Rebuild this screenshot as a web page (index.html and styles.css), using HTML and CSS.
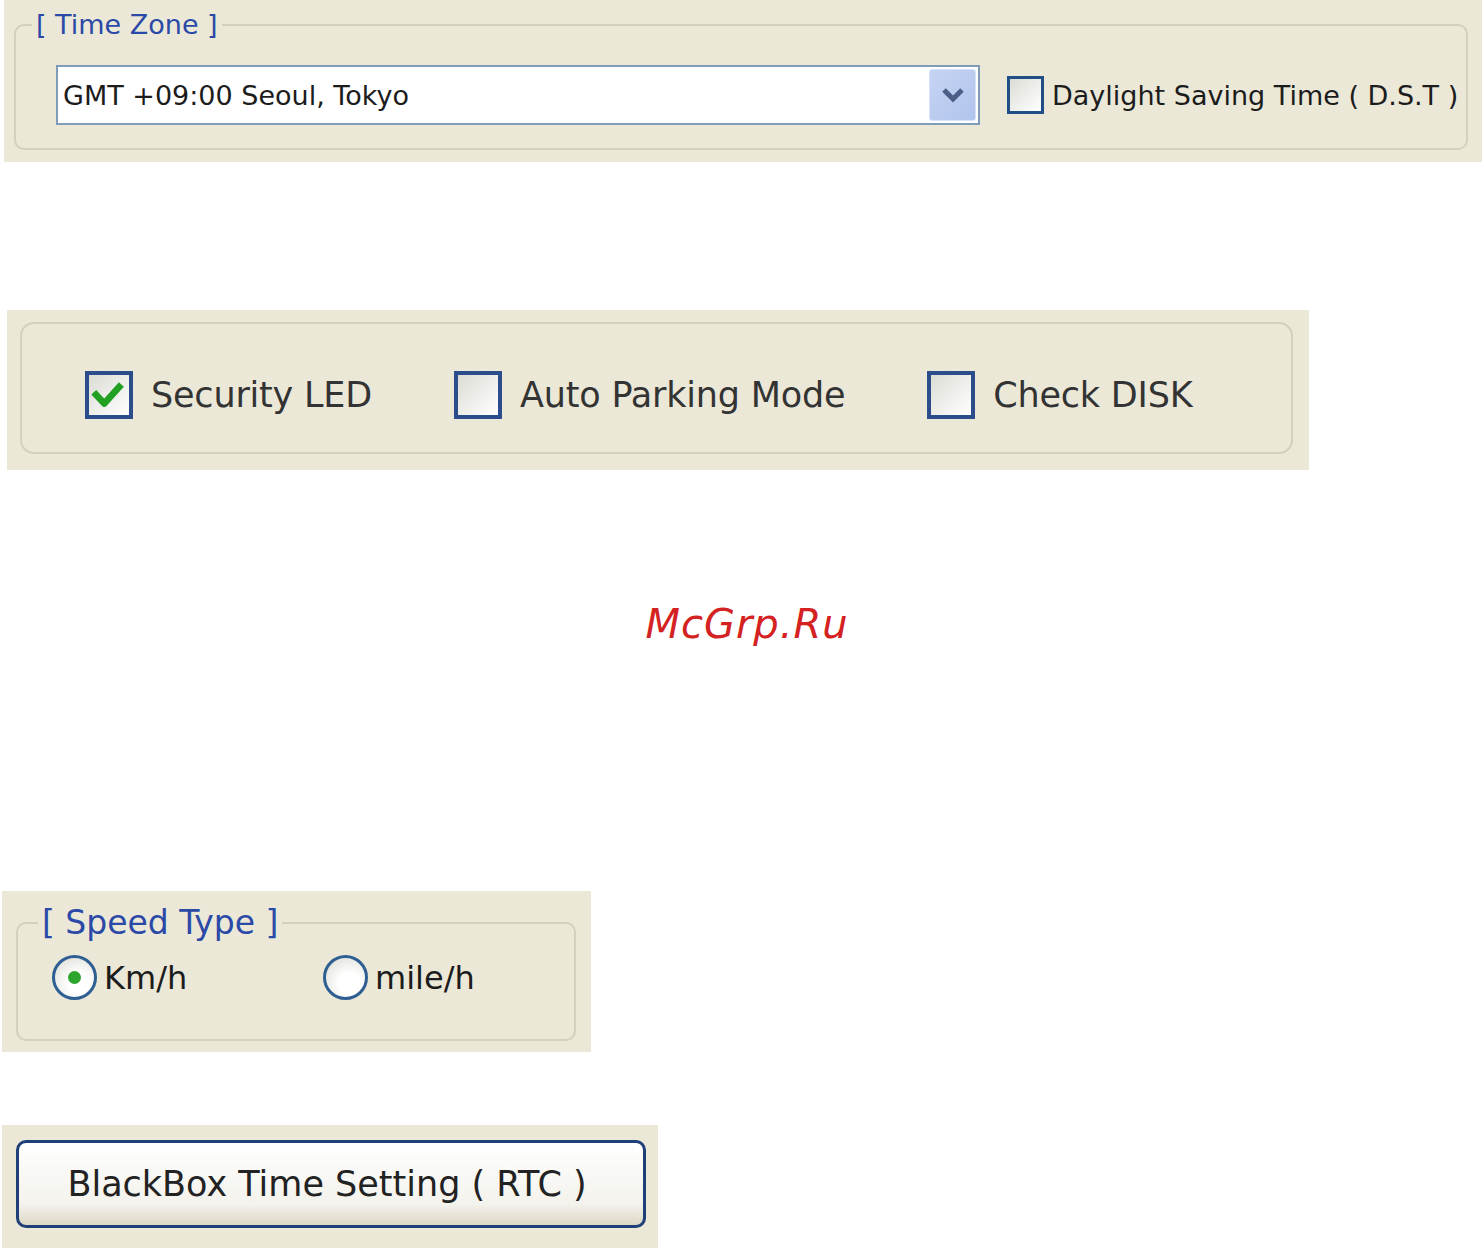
FILE: index.html
```html
<!DOCTYPE html>
<html lang="en">
<head>
    <meta charset="UTF-8">
    <title>BlackBox Settings</title>
    <link rel="stylesheet" href="styles.css">
</head>
<body>

    <!-- time zone -->
    <div class="panel panel-timezone">
        <fieldset class="group">
            <legend>[ Time Zone ]</legend>
            <div class="tz-row">
                <div class="combo">
                    <span class="combo-text">GMT +09:00 Seoul, Tokyo</span>
                    <span class="combo-btn">
                        <svg width="24" height="16" viewBox="0 0 24 16">
                            <path d="M3 3 L12 12 L21 3" fill="none" stroke="#4b5f86" stroke-width="5"/>
                        </svg>
                    </span>
                </div>
                <label class="check small">
                    <span class="box"></span>
                    <span>Daylight Saving Time ( D.S.T )</span>
                </label>
            </div>
        </fieldset>
    </div>

    <!-- options -->
    <div class="panel panel-options">
        <div class="group options-row">
            <label class="check big">
                <span class="box">
                    <svg width="42" height="42" viewBox="0 0 42 42">
                        <path d="M5 18 L16 30 L34 10" fill="none" stroke="#22a022" stroke-width="7" stroke-linejoin="round"/>
                    </svg>
                </span>
                <span>Security LED</span>
            </label>
            <label class="check big">
                <span class="box"></span>
                <span>Auto Parking Mode</span>
            </label>
            <label class="check big">
                <span class="box"></span>
                <span>Check DISK</span>
            </label>
        </div>
    </div>

    <div class="watermark">McGrp.Ru</div>

    <!-- speed type -->
    <div class="panel panel-speed">
        <fieldset class="group">
            <legend>[ Speed Type ]</legend>
            <div class="speed-row">
                <label class="radio">
                    <span class="dot selected"></span>
                    <span>Km/h</span>
                </label>
                <label class="radio">
                    <span class="dot"></span>
                    <span>mile/h</span>
                </label>
            </div>
        </fieldset>
    </div>

    <div class="panel panel-rtc">
        <button class="rtc-btn">BlackBox Time Setting ( RTC )</button>
    </div>

</body>
</html>
```

FILE: styles.css
```css
body, html {
    margin: 0;
    padding: 0;
    background-color: #ffffff;
    font-family: "DejaVu Sans", Verdana, sans-serif;
    color: #262626;
}
.panel {
    background-color: #ebe8d8;
    box-sizing: border-box;
}
.group {
    border: 2px solid #d3d0bf;
    border-radius: 10px;
    margin: 0;
    min-width: 0;
}
legend {
    color: #2b49a6;
    padding: 0 4px;
}

/* time zone */
.panel-timezone {
    margin-left: 4px;
    width: 1478px;
    height: 162px;
    padding: 9px 14px 0 10px;
}
.panel-timezone .group {
    height: 141px;
    box-sizing: border-box;
    padding: 24px 0 0 40px;
}
.panel-timezone legend {
    font-size: 27px;
    line-height: 32px;
    margin-left: -24px;
}
.tz-row {
    display: flex;
    align-items: center;
}
.combo {
    width: 924px;
    height: 60px;
    box-sizing: border-box;
    border: 2px solid #7f9db9;
    background-color: #ffffff;
    display: flex;
    align-items: center;
    justify-content: space-between;
    padding: 0 2px 0 5px;
    margin-right: 27px;
}
.combo-text {
    font-size: 27px;
    color: #1c1c1c;
}
.combo-btn {
    width: 45px;
    height: 50px;
    border-radius: 3px;
    background: linear-gradient(135deg, #c6d4f3, #b1c4ec);
    border: 1px solid #d7e2fa;
    display: flex;
    align-items: center;
    justify-content: center;
}
.check {
    display: flex;
    align-items: center;
}
.box {
    box-sizing: border-box;
    border: 3px solid #1f4f86;
    background: linear-gradient(135deg, #dcdcd5, #ffffff);
    display: flex;
    align-items: center;
    justify-content: center;
}
.check.small .box {
    width: 37px;
    height: 38px;
    margin-right: 8px;
}
.check.small {
    font-size: 27px;
    color: #1c1c1c;
}

/* options */
.panel-options {
    margin: 148px 0 0 7px;
    width: 1302px;
    height: 160px;
    padding: 12px 16px 0 13px;
}
.options-row {
    height: 132px;
    box-sizing: border-box;
    display: flex;
    align-items: center;
    padding: 14px 0 0 63px;
    gap: 82px;
    border-radius: 14px;
}
.check.big {
    font-size: 35px;
    letter-spacing: -0.2px;
    color: #333333;
    gap: 18px;
}
.check.big .box {
    width: 48px;
    height: 48px;
    border-width: 4px;
    border-color: #2b4d8c;
}

.watermark {
    margin: 130px 0 243px;
    padding-left: 12px;
    text-align: center;
    font-size: 40px;
    line-height: 48px;
    font-style: italic;
    letter-spacing: 1px;
    color: #d42222;
}

/* speed type */
.panel-speed {
    margin-left: 2px;
    width: 589px;
    height: 161px;
    padding: 12px 15px 0 14px;
}
.panel-speed .group {
    height: 138px;
    box-sizing: border-box;
    padding: 12px 0 0 34px;
}
.panel-speed legend {
    font-size: 33px;
    line-height: 40px;
    margin-left: -14px;
}
.speed-row {
    display: flex;
}
.radio {
    display: flex;
    align-items: center;
    gap: 7px;
    font-size: 32px;
    color: #1c1c1c;
}
.radio:first-child {
    width: 271px;
}
.dot {
    width: 45px;
    height: 45px;
    box-sizing: border-box;
    border-radius: 50%;
    border: 3px solid #2f5f92;
    background: radial-gradient(circle at 60% 65%, #ffffff 30%, #d8d8d0 100%);
    display: flex;
    align-items: center;
    justify-content: center;
}
.dot.selected::after {
    content: "";
    width: 13px;
    height: 13px;
    border-radius: 50%;
    background-color: #2da52d;
}

/* rtc button */
.panel-rtc {
    margin: 73px 0 0 2px;
    width: 656px;
    height: 123px;
    padding: 15px 12px 0 14px;
}
.rtc-btn {
    width: 630px;
    height: 88px;
    border: 3px solid #1f3f78;
    border-radius: 10px;
    background: linear-gradient(#ffffff, #f3f2ec 75%, #ddd7c4);
    font-family: "DejaVu Sans", Verdana, sans-serif;
    font-size: 35px;
    color: #222222;
    padding: 0 8px 0 0;
}
```
